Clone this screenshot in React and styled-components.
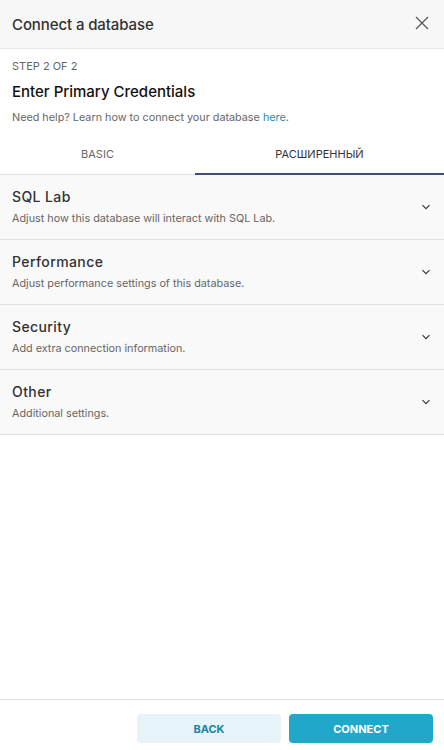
import styled, { createGlobalStyle } from 'styled-components'

const Global = createGlobalStyle`
  html, body { margin: 0; padding: 0; }
  body { font-family: Inter, "Noto Sans", sans-serif; background: #fff; }
  * { box-sizing: border-box; }
`

const sections = [
  { title: 'SQL Lab', text: 'Adjust how this database will interact with SQL Lab.' },
  { title: 'Performance', text: 'Adjust performance settings of this database.' },
  { title: 'Security', text: 'Add extra connection information.' },
  { title: 'Other', text: 'Additional settings.' },
]

function Chevron() {
  return (
    <svg width="10" height="10" viewBox="0 0 10 10" fill="none">
      <path d="M1.5 3.2 L5 6.7 L8.5 3.2" stroke="#333" strokeWidth="1.1" />
    </svg>
  )
}

function Close() {
  return (
    <svg width="14" height="14" viewBox="0 0 14 14" fill="none">
      <path d="M1 1 L13 13 M13 1 L1 13" stroke="#555" strokeWidth="1.2" />
    </svg>
  )
}

export default function App() {
  return (
    <>
      <Global />
      <Modal>
        <Header>
          <Title>Connect a database</Title>
          <CloseBtn><Close /></CloseBtn>
        </Header>
        <Intro>
          <Step>STEP 2 OF 2</Step>
          <Heading>Enter Primary Credentials</Heading>
          <Help>
            Need help? Learn how to connect your database <Link>here</Link>.
          </Help>
        </Intro>
        <Tabs>
          <Tab>BASIC</Tab>
          <Tab active>РАСШИРЕННЫЙ</Tab>
        </Tabs>
        <Panel>
          {sections.map((s) => (
            <Section key={s.title}>
              <div>
                <SectionTitle>{s.title}</SectionTitle>
                <SectionText>{s.text}</SectionText>
              </div>
              <Chevron />
            </Section>
          ))}
        </Panel>
        <Footer>
          <Button>BACK</Button>
          <Button primary>CONNECT</Button>
        </Footer>
      </Modal>
    </>
  )
}

const Modal = styled.div`
  height: 100vh;
  display: flex;
  flex-direction: column;
`

const Header = styled.div`
  height: 49px;
  flex-shrink: 0;
  background: #f7f7f7;
  border-bottom: 1px solid #e6e6e6;
  display: flex;
  align-items: center;
  justify-content: space-between;
  padding: 0 15px 0 12px;
`

const Title = styled.div`
  font-size: 15px;
  font-weight: 500;
  color: #323232;
  letter-spacing: -0.1px;
`

const CloseBtn = styled.div`
  display: flex;
  margin-top: -2px;
`

const Intro = styled.div`
  padding: 10px 12px 0;
`

const Step = styled.div`
  font-size: 11px;
  color: #666;
  line-height: 14px;
`

const Heading = styled.div`
  font-size: 15px;
  font-weight: 500;
  color: #111;
  margin-top: 10px;
  line-height: 18px;
`

const Help = styled.div`
  font-size: 10.8px;
  color: #666;
  margin-top: 10px;
  line-height: 14px;
`

const Link = styled.span`
  color: #1f8db5;
`

const Tabs = styled.div`
  display: grid;
  grid-template-columns: 195px 1fr;
  margin-top: 9px;
  border-bottom: 1px solid #e0e0e0;
`

const Tab = styled.div`
  height: 41px;
  display: flex;
  align-items: center;
  justify-content: center;
  font-size: 11px;
  color: ${(p) => (p.active ? '#333' : '#666')};
  border-bottom: 2px solid ${(p) => (p.active ? '#444e7c' : 'transparent')};
  margin-bottom: -1px;
`

const Panel = styled.div`
  flex: 1;
`

const Section = styled.div`
  height: 65px;
  background: #f9f9f9;
  border-bottom: 1px solid #e0e0e0;
  display: flex;
  align-items: center;
  justify-content: space-between;
  padding: 0 13px 0 12px;
`

const SectionTitle = styled.div`
  font-size: 14px;
  font-weight: 500;
  color: #323232;
  letter-spacing: 0.4px;
  line-height: 18px;
`

const SectionText = styled.div`
  font-size: 10.8px;
  color: #666;
  margin-top: 6px;
  line-height: 14px;
`

const Footer = styled.div`
  flex-shrink: 0;
  border-top: 1px solid #e0e0e0;
  display: flex;
  justify-content: flex-end;
  gap: 8px;
  padding: 14px 11px 7px;
`

const Button = styled.div`
  width: 144px;
  height: 29px;
  border-radius: 4px;
  display: flex;
  align-items: center;
  justify-content: center;
  font-size: 11px;
  font-weight: 700;
  background: ${(p) => (p.primary ? '#20a7c9' : '#e6f4f9')};
  color: ${(p) => (p.primary ? '#fff' : '#1a85a0')};
`
